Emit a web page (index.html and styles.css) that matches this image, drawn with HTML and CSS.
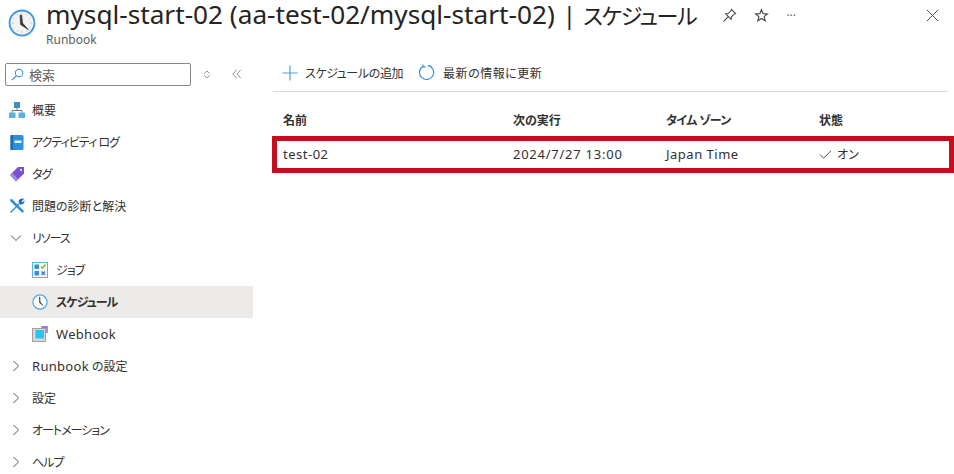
FILE: index.html
```html
<!DOCTYPE html>
<html lang="ja">
<head>
<meta charset="utf-8">
<title>スケジュール</title>
<link rel="stylesheet" href="styles.css">
</head>
<body>
<header class="header">
  <svg class="header-icon" viewBox="0 0 36 36" width="28" height="28"><circle cx="18" cy="18" r="16" fill="#f3f3f3" stroke="#3b9ae1" stroke-width="2.4"/><path d="M18 5.5 V7.5 M18 28.5 V30.5 M5.5 18 H7.5 M28.5 18 H30.5 M11.7 7 L12.4 8.3 M24.3 7 L23.6 8.3 M7 11.7 L8.3 12.4 M29 11.7 L27.7 12.4 M7 24.3 L8.3 23.6 M29 24.3 L27.7 23.6 M11.7 29 L12.4 27.7 M24.3 29 L23.6 27.7" stroke="#a8a8a8" stroke-width="0.9"/><path d="M15.5 8 L16.2 20 L26 26.5 L18.6 18 L17.6 8Z" fill="#3a3a3a" stroke="#3a3a3a" stroke-width="1"/></svg>
  <div class="header-text">
    <h1 class="title">mysql-start-02 (aa-test-02/mysql-start-02)<span class="title-sep">|</span><span class="title-kana">スケジュール</span></h1>
    <div class="subtitle">Runbook</div>
  </div>
  <div class="header-actions">
    <svg viewBox="0 0 16 16" width="15" height="15"><path d="M10 1.5 L14.5 6 L13 6.5 L10 9.5 L9.8 12 L4 6.2 L6.5 6 L9.5 3Z M6.5 9.5 L1.5 14.5" fill="none" stroke="#444" stroke-width="1.1"/></svg>
    <svg viewBox="0 0 16 16" width="15" height="15"><path d="M8 1.8 L9.7 6 L14.3 6.3 L10.8 9.2 L11.9 13.7 L8 11.2 L4.1 13.7 L5.2 9.2 L1.7 6.3 L6.3 6Z" fill="none" stroke="#444" stroke-width="1.2"/></svg>
    <span class="more">···</span>
    <svg class="close" viewBox="0 0 14 14" width="13" height="13"><path d="M1 1 L13 13 M13 1 L1 13" stroke="#444" stroke-width="1" fill="none"/></svg>
  </div>
</header>
<div class="body">
  <nav class="sidebar">
    <div class="search-row">
      <div class="search">
        <svg viewBox="0 0 14 14" width="13" height="13"><circle cx="8.7" cy="5.3" r="4" fill="none" stroke="#2f8fd8" stroke-width="1.1"/><path d="M5.8 8.2 L1 13" stroke="#2f8fd8" stroke-width="1.2"/></svg>
        <span>検索</span>
      </div>
      <svg class="updown" viewBox="0 0 10 12" width="8" height="11"><path d="M5 1.5 L8.5 5 M5 1.5 L1.5 5 M1.5 7 L5 10.5 L8.5 7" stroke="#777" fill="none"/></svg>
      <svg class="collapse" viewBox="0 0 12 12" width="10" height="10"><path d="M5.5 1 L1 6 L5.5 11 M10.5 1 L6 6 L10.5 11" stroke="#777" fill="none"/></svg>
    </div>
    <ul class="menu">
      <li class="item"><svg class="ico" viewBox="0 0 16 16" width="16" height="16"><rect x="5" y="0" width="6" height="6" fill="#3e8fc4"/><rect x="0" y="10.5" width="6.5" height="5.5" fill="#59b4d9"/><rect x="9.5" y="10.5" width="6.5" height="5.5" fill="#59b4d9"/><path d="M8 5 V8.5 M3 10.5 V8.5 H13 V10.5" stroke="#777" fill="none"/></svg><span>概要</span></li>
      <li class="item"><svg class="ico" viewBox="0 0 16 16" width="16" height="16"><rect x="1.5" y="1" width="13" height="15" rx="1.5" fill="#2f8fd8"/><rect x="1.5" y="1" width="2.5" height="15" fill="#1f6fb0"/><rect x="5.5" y="6.5" width="7" height="2.5" fill="#e6f3fb"/></svg><span class="kana">アクティビティ ログ</span></li>
      <li class="item"><svg class="ico" viewBox="0 0 16 16" width="16" height="16"><path d="M1 9 L9 1 H15 V7.5 L7 15.5Z" fill="#7a4fd0"/><path d="M1 9 L7 15.5 L9 13 L3 7Z" fill="#a98de3"/><circle cx="12" cy="4" r="1.2" fill="#d9ccf3"/></svg><span class="kana">タグ</span></li>
      <li class="item"><svg class="ico" viewBox="0 0 16 16" width="16" height="16"><path d="M2 15 L1 14 L10 5 L11 6Z M1 1.5 L3 1 L15 13 L13.5 15 L1.5 3.5Z" fill="#2f8fd8"/><path d="M9.5 3.5 C10 1 13 0 15 1 L12.5 3.5 L13 4.5 L15.5 2.5 C16 5 13.5 7 11 6.5Z" fill="#1f6fb0"/></svg><span>問題の診断と解決</span></li>
      <li class="item"><svg class="chev" viewBox="0 0 12 12" width="12" height="12"><path d="M1 3.5 L6 8.5 L11 3.5" stroke="#555" fill="none"/></svg><span class="kana">リソース</span></li>
      <li class="item sub"><svg class="ico" viewBox="0 0 16 16" width="16" height="16"><rect x="0.5" y="0.5" width="15" height="15" fill="#f5fbfe" stroke="#59b4d9"/><rect x="2.5" y="2.5" width="4.5" height="4.5" fill="#3e8fc4"/><rect x="2.5" y="9" width="4.5" height="4.5" fill="#3e8fc4"/><path d="M9 4.5 L10.5 6 L13.5 2.5" stroke="#7fba00" stroke-width="1.3" fill="none"/><path d="M9.5 9.5 L13 13 M13 9.5 L9.5 13" stroke="#2f7fc4" stroke-width="1.3"/></svg><span class="kana">ジョブ</span></li>
      <li class="item sub active"><svg class="ico" viewBox="0 0 36 36" width="16" height="16"><circle cx="18" cy="18" r="16" fill="#fff" stroke="#4aa3e6" stroke-width="2.6"/><path d="M16.5 7 L17 20 L25 26 L18.5 18 L18 7Z" fill="#3a3a3a" stroke="#3a3a3a"/></svg><span class="kana">スケジュール</span></li>
      <li class="item sub"><svg class="ico" viewBox="0 0 16 16" width="16" height="16"><rect x="0.5" y="2.5" width="13" height="13" fill="#d8d8d8" stroke="#a0a0a0"/><rect x="3.5" y="4" width="8.5" height="8.5" fill="#29c4f0"/><path d="M9.5 1 H15 V7" stroke="#7a4fd0" stroke-width="1.3" fill="none"/></svg><span class="latin">Webhook</span></li>
      <li class="item"><svg class="chev" viewBox="0 0 12 12" width="12" height="12"><path d="M3.5 1 L8.5 6 L3.5 11" stroke="#555" fill="none"/></svg><span><span class="latin">Runbook</span> の設定</span></li>
      <li class="item"><svg class="chev" viewBox="0 0 12 12" width="12" height="12"><path d="M3.5 1 L8.5 6 L3.5 11" stroke="#555" fill="none"/></svg><span>設定</span></li>
      <li class="item"><svg class="chev" viewBox="0 0 12 12" width="12" height="12"><path d="M3.5 1 L8.5 6 L3.5 11" stroke="#555" fill="none"/></svg><span class="kana">オートメーション</span></li>
      <li class="item"><svg class="chev" viewBox="0 0 12 12" width="12" height="12"><path d="M3.5 1 L8.5 6 L3.5 11" stroke="#555" fill="none"/></svg><span class="kana">ヘルプ</span></li>
    </ul>
  </nav>
  <main class="main">
    <div class="toolbar">
      <button class="tool"><svg viewBox="0 0 16 16" width="16" height="16"><path d="M8 0.5 V15.5 M0.5 8 H15.5" stroke="#4a9fe0" stroke-width="1.2"/></svg><span class="add-label">スケジュールの追加</span></button>
      <button class="tool"><svg viewBox="0 0 18 18" width="17" height="17"><path d="M10.5 1.5 A7.5 7.5 0 1 1 5 2.6 M5.2 0.6 V3 H8" stroke="#2f8fd8" stroke-width="1.2" fill="none"/></svg><span class="refresh-label">最新の情報に更新</span></button>
    </div>
    <div class="table-head">
      <div class="col-name">名前</div>
      <div class="col-next">次の実行</div>
      <div class="col-tz tz-head">タイム ゾーン</div>
      <div class="col-state">状態</div>
    </div>
    <div class="table-row">
      <div class="col-name">test-02</div>
      <div class="col-next date">2024/7/27 13:00</div>
      <div class="col-tz">Japan Time</div>
      <div class="col-state"><svg viewBox="0 0 14 12" width="13" height="11"><path d="M1 6 L5 10 L13 2" stroke="#444" fill="none"/></svg> オン</div>
    </div>
  </main>
</div>
</body>
</html>
```
FILE: styles.css
```css
* { box-sizing: border-box; }
html, body { margin: 0; padding: 0; }
body {
  width: 954px;
  height: 474px;
  overflow: hidden;
  background: #fff;
  color: #323130;
  font-family: "Noto Sans", "Noto Sans CJK JP", sans-serif;
  font-size: 12px;
  font-feature-settings: "palt";
}
.header { display: flex; align-items: flex-start; height: 50px; padding-left: 8px; }
.header-icon { margin-top: 9px; flex: none; }
.header-text { margin-left: 10px; flex: none; }
.title { margin: 0; font-size: 26.2px; line-height: 29px; font-weight: 400; color: #252423; white-space: nowrap; }
.title-sep { margin: 0 7px 0 8px; font-size: 24px; }
.title-kana { font-size: 22px; letter-spacing: -1.3px; }
.subtitle { font-size: 12px; line-height: 14px; margin-top: 3px; color: #605e5c; }
.header-actions { display: flex; align-items: center; gap: 17px; margin-left: 26px; margin-top: 7px; flex: 1; padding-right: 15px; }
.more { color: #666; font-size: 12px; }
.close { margin-left: auto; }
.body { display: flex; height: 424px; }
.sidebar { width: 253px; flex: none; }
.search-row { display: flex; align-items: center; padding: 12px 0 0 5px; height: 36px; }
.search { width: 186px; height: 23px; border: 1px solid #8a8886; border-radius: 2px; display: flex; align-items: center; gap: 5px; padding-left: 5px; color: #605e5c; font-size: 13px; }
.updown { margin-left: 12px; }
.collapse { margin-left: 21px; }
.menu { list-style: none; margin: 8px 0 0; padding: 0; }
.item { height: 32px; display: flex; align-items: center; padding-left: 9px; gap: 7px; font-size: 12px; color: #323130; white-space: nowrap; }
.latin { font-size: 13px; letter-spacing: 0.3px; }
.kana { letter-spacing: -1px; }
.ico { flex: none; }
.chev { flex: none; margin-right: 3px; margin-left: 1px; }
.sub { padding-left: 32px; gap: 8px; }
.active { background: #edebe9; font-weight: 700; }
.main { flex: 1; padding-left: 20px; min-width: 0; }
.toolbar { display: flex; align-items: center; gap: 15px; height: 42px; margin-right: 6px; border-bottom: 1px solid #d9d9d9; padding-left: 9px; padding-top: 4px; }
.tool { display: flex; align-items: center; gap: 7px; padding: 0; border: 0; background: none; font: inherit; font-feature-settings: inherit; color: #323130; white-space: nowrap; }
.add-label { letter-spacing: -0.4px; }
.refresh-label { letter-spacing: 0.5px; margin-left: 1px; }
.table-head, .table-row { display: flex; align-items: center; font-size: 12px; }
.table-head { height: 44px; padding: 12px 0 0 10px; font-weight: 700; }
.tz-head { letter-spacing: -0.6px; }
.table-row { width: 682px; height: 37px; margin-left: -1px; border: 5px solid #c50f1f; padding: 0 0 1px 6px; font-size: 13px; letter-spacing: 0.5px; }
.date { letter-spacing: 0.75px; }
.col-name { width: 230px; }
.col-next { width: 153px; }
.col-tz { width: 153px; }
.col-state { display: flex; align-items: center; gap: 5px; font-size: 12px; letter-spacing: 0; }
```
